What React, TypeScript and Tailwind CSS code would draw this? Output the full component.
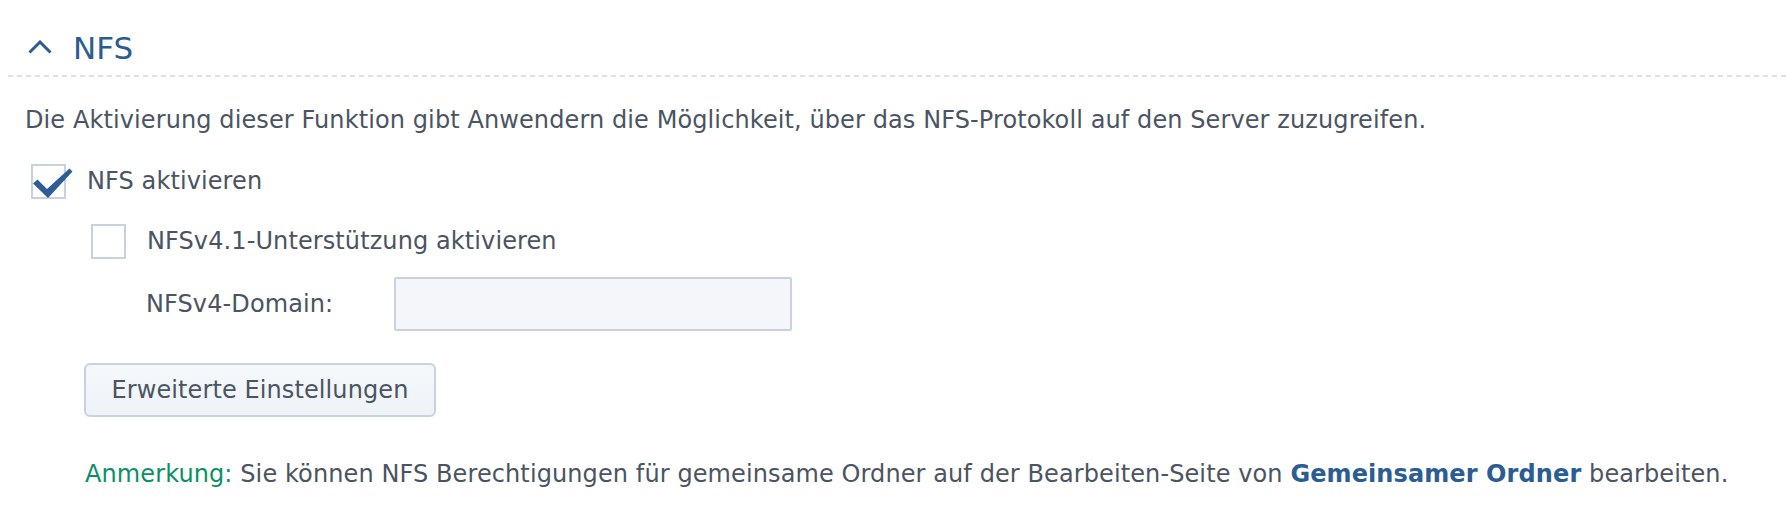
import React, { useState } from 'react';

const font = { fontFamily: '"DejaVu Sans", Verdana, sans-serif' };

const Checkbox: React.FC<{ checked: boolean; onToggle: () => void }> = ({ checked, onToggle }) => (
  <button type="button" onClick={onToggle} className="relative w-[35px] h-[35px] shrink-0 border-2 border-[#c8d2de] bg-white">
    {checked && (
      <svg className="absolute left-[-1px] top-[2px] w-[42px] h-[32px]" viewBox="0 0 42 32" fill="none">
        <path d="M1 15.5 L5.5 11.5 L15 21 L37.5 0.5 L40.5 3.5 L16 30 Z" fill="#2c5d98" />
      </svg>
    )}
  </button>
);

export default function App() {
  const [nfs, setNfs] = useState(true);
  const [v41, setV41] = useState(false);
  const [domain, setDomain] = useState('');

  return (
    <div className="w-full h-[526px] bg-white text-[#4a5462] tracking-[0.1px] overflow-hidden" style={font}>
      {/* Section header */}
      <div className="pt-[29px] pl-[28px] flex items-center gap-[21px] h-[67px]">
        <svg className="w-[24px] h-[14px] mt-[-2px]" viewBox="0 0 24 14" fill="none">
          <polyline points="1.5,12.5 12,2 22.5,12.5" stroke="#2c5c94" strokeWidth="3" />
        </svg>
        <span className="text-[31px] leading-[38px] tracking-normal text-[#2c5c94]">NFS</span>
      </div>
      <div className="ml-[8px] mt-[8px] h-[2px] bg-[linear-gradient(to_right,#d9e2ec_5px,transparent_5px)] bg-[length:9px_2px]" />

      <p className="mt-[27px] pl-[25px] text-[24px] leading-[32px]">
        Die Aktivierung dieser Funktion gibt Anwendern die Möglichkeit, über das NFS-Protokoll auf den Server zuzugreifen.
      </p>

      <div className="mt-[28px] pl-[31px] flex items-center gap-[21px]">
        <Checkbox checked={nfs} onToggle={() => setNfs(!nfs)} />
        <span className="text-[24px] leading-[35px]">NFS aktivieren</span>
      </div>

      <div className="mt-[25px] pl-[91px] flex items-center gap-[21px]">
        <Checkbox checked={v41} onToggle={() => setV41(!v41)} />
        <span className="text-[24px] leading-[35px]">NFSv4.1-Unterstützung aktivieren</span>
      </div>

      <div className="mt-[18px] pl-[146px] flex items-center">
        <label className="w-[248px] text-[24px] leading-[35px]">NFSv4-Domain:</label>
        <input
          value={domain}
          onChange={e => setDomain(e.target.value)}
          className="w-[398px] h-[54px] rounded-[2px] border-2 border-[#c9d3df] bg-[#f5f6f9] px-3 text-[24px] outline-none"
        />
      </div>

      <div className="mt-[32px] pl-[84px]">
        <button className="w-[352px] h-[54px] rounded-[6px] border-2 border-[#c9d3df] bg-[linear-gradient(#f5f8fb,#eef3f8)] text-[24px] leading-[32px] text-[#4a5462]">
          Erweiterte Einstellungen
        </button>
      </div>

      <p className="mt-[41px] pl-[85px] text-[24px] leading-[32px]">
        <span className="text-[#0b9066]">Anmerkung:</span> Sie können NFS Berechtigungen für gemeinsame Ordner auf der Bearbeiten-Seite von{' '}
        <a className="font-bold text-[#2c5c94] cursor-pointer">Gemeinsamer Ordner</a> bearbeiten.
      </p>
    </div>
  );
}
